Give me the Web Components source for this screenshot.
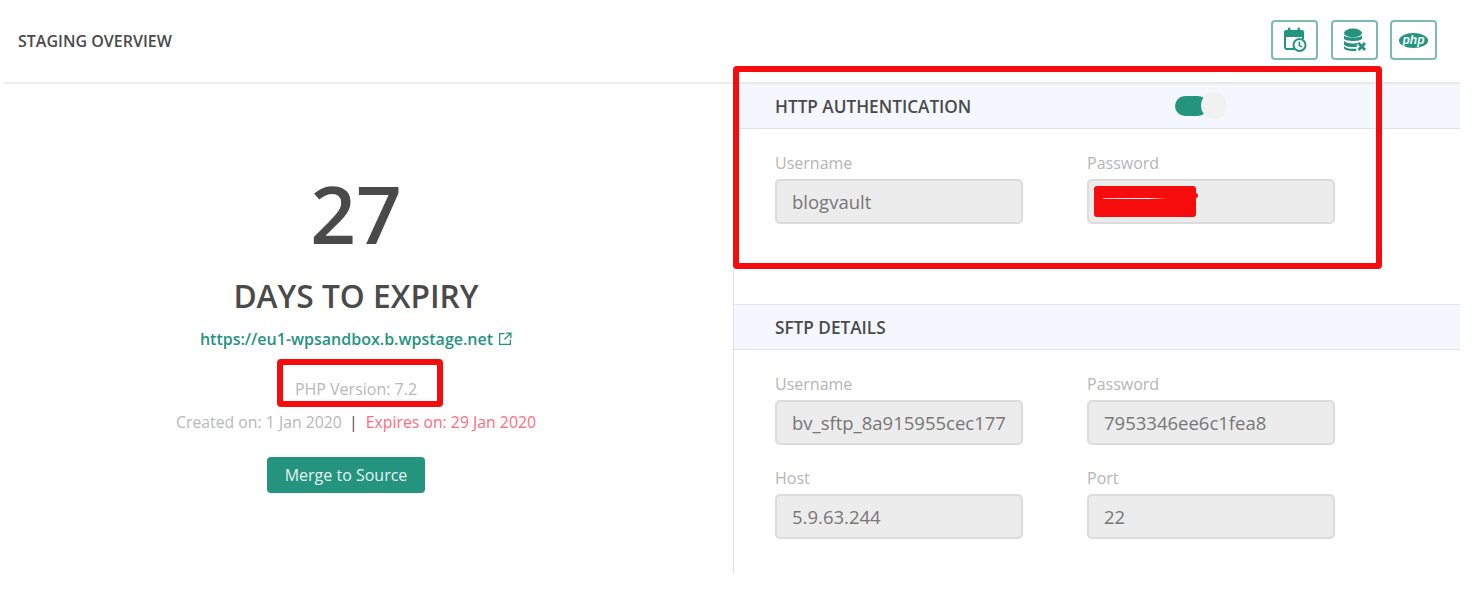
<!DOCTYPE html>
<html lang="en">
<head>
<meta charset="utf-8">
<title>Staging Overview</title>
<style>
  html, body { margin: 0; background: #fff; }
  body { font-family: "Open Sans", "Liberation Sans", sans-serif; color: #4a4a4a; }
</style>
</head>
<body>
<staging-page>
  <overview-header slot="header" title-text="Staging Overview">
    <icon-button icon="schedule" style="margin-right:1px"></icon-button>
    <icon-button icon="database"></icon-button>
    <icon-button icon="php"></icon-button>
  </overview-header>
  <expiry-panel slot="left"></expiry-panel>
  <detail-section slot="right" heading="HTTP Authentication" toggle>
    <field-box label="Username" value="blogvault"></field-box>
    <field-box label="Password" value="" masked></field-box>
  </detail-section>
  <detail-section slot="right" heading="SFTP Details">
    <field-box label="Username" value="bv_sftp_8a915955cec177"></field-box>
    <field-box label="Password" value="7953346ee6c1fea8"></field-box>
    <field-box label="Host" value="5.9.63.244"></field-box>
    <field-box label="Port" value="22"></field-box>
  </detail-section>
  <annotation-box slot="notes" style="left:733px;top:66px;width:649px;height:203px"></annotation-box>
  <annotation-box slot="notes" style="left:277px;top:359px;width:166px;height:48px"></annotation-box>
</staging-page>

<script>
  class StagingPage extends HTMLElement {
    constructor() {
      super();
      this._shadowRoot = this.attachShadow({ mode: "open" });
      this._shadowRoot.innerHTML = `
        <style>
          :host { display: block; position: relative; width: 1476px; height: 610px; overflow: hidden; }
          .content { display: grid; grid-template-columns: 729px 727px; margin: -1px 0 0 4px; width: 1456px; }
          .right { height: 491px; border-left: 1px solid #e3e3e3; display: flex; flex-direction: column; }
        </style>
        <slot name="header"></slot>
        <div class="content">
          <div><slot name="left"></slot></div>
          <div class="right"><slot name="right"></slot></div>
        </div>
        <slot name="notes"></slot>
      `;
    }
  }

  class OverviewHeader extends HTMLElement {
    constructor() {
      super();
      this._shadowRoot = this.attachShadow({ mode: "open" });
      this._shadowRoot.innerHTML = `
        <style>
          :host { display: flex; align-items: center; justify-content: space-between; box-sizing: border-box;
            width: 1456px; height: 84px; margin-left: 4px; padding: 0 23px 2px 14px; border-bottom: 2px solid #ececec; }
          h1 { margin: 0; padding-top: 2px; font-size: 16px; font-weight: 600; color: #4a4a4a; text-transform: uppercase; }
          .actions { display: flex; gap: 12px; }
        </style>
        <h1></h1>
        <div class="actions"><slot></slot></div>
      `;
      this._shadowRoot.querySelector("h1").textContent = this.getAttribute("title-text");
    }
  }

  const ICONS = {
    schedule: `
      <svg width="24" height="26" viewBox="0 0 24 26" fill="none">
        <path d="M2 7.500V20a2 2 0 0 0 2 2h7" stroke="#25947f" stroke-width="2"/>
        <path d="M1 5a2 2 0 0 1 2-2h16a2 2 0 0 1 2 2v5H1z" fill="#25947f"/>
        <path d="M20 9v3" stroke="#25947f" stroke-width="2"/>
        <rect x="5" y="0.500" width="2.400" height="4" rx="1" fill="#25947f"/>
        <rect x="14.500" y="0.500" width="2.400" height="4" rx="1" fill="#25947f"/>
        <circle cx="16.500" cy="18" r="6" fill="#fff" stroke="#25947f" stroke-width="2"/>
        <path d="M16.300 14.600v3.800l2.800 1.500" stroke="#25947f" stroke-width="1.600"/>
      </svg>`,
    database: `
      <svg width="24" height="24" viewBox="0 0 24 24" fill="#25947f">
        <ellipse cx="10" cy="5" rx="9" ry="4.400"/>
        <path d="M1 7.200C2.600 10.400 17.400 10.400 19 7.200v3.600c-1.600 3-16.400 3-18 0z"/>
        <path d="M1 12.800c2 3 11 3.400 15 1.600l-2.500 2.800 .6 1.600C9 19.600 2.600 18.800 1 16.400z"/>
        <path d="M1 18c1.600 2.600 7.500 3.200 12 2.700l.5 2.100C8 23.400 1 22.400 1 20z"/>
        <path d="M15.500 15l6.500 7M22 15l-6.500 7" stroke="#25947f" stroke-width="2.800" fill="none"/>
      </svg>`,
    php: `
      <svg width="29" height="15" viewBox="0 0 29 15">
        <ellipse cx="14.500" cy="7.500" rx="14.500" ry="7.500" fill="#25947f"/>
        <text x="14.500" y="10.500" text-anchor="middle" fill="#eef8f6" font-family="'Liberation Sans', sans-serif"
          font-size="12" font-weight="700" font-style="italic">php</text>
      </svg>`,
  };

  class IconButton extends HTMLElement {
    constructor() {
      super();
      this._shadowRoot = this.attachShadow({ mode: "open" });
      this._shadowRoot.innerHTML = `
        <style>
          :host { display: flex; align-items: center; justify-content: center; box-sizing: border-box;
            width: 47px; height: 40px; border: 2px solid #7cbcb0; border-radius: 4px; background: #fff; }
          svg { display: block; }
        </style>
        ${ICONS[this.getAttribute("icon")]}
      `;
    }
  }

  class ExpiryPanel extends HTMLElement {
    constructor() {
      super();
      this._shadowRoot = this.attachShadow({ mode: "open" });
      this._shadowRoot.innerHTML = `
        <style>
          :host { display: flex; flex-direction: column; align-items: center; box-sizing: border-box;
            width: 704px; padding-top: 78px; text-align: center; }
          .count { font-size: 80px; line-height: 104px; font-weight: 600; color: #4a4a4a; }
          h2 { margin: 10px 0 0; font-size: 31.700px; line-height: 42px; font-weight: 600; color: #4a4a4a; text-transform: uppercase; }
          a { display: flex; align-items: center; gap: 5px; margin-top: 11px; font-size: 16px; line-height: 22px;
            font-weight: 600; color: #25947f; text-decoration: none; }
          .php { margin-top: 28px; font-size: 16px; line-height: 22px; color: #b8b8b8; }
          .dates { margin-top: 11px; font-size: 15.800px; line-height: 22px; color: #b8b8b8; }
          .sep { color: #4a4a4a; margin: 0 4px 0 3px; }
          .expires { color: #ff6b81; }
          button { margin: 24px 20px 0 0; width: 158px; height: 36px; border: 0; border-radius: 4px; padding: 0;
            background: #25947f; color: #e4f3f0; font: 400 16px "Open Sans", sans-serif; }
        </style>
        <div class="count">27</div>
        <h2>Days to Expiry</h2>
        <a href="#">https://eu1-wpsandbox.b.wpstage.net
          <svg width="14" height="14" viewBox="0 0 13 13" fill="none" stroke="#25947f" stroke-width="1.200">
            <path d="M6 1.500H1.500v10h10V7M7.500 1h4.500v4.500M12 1L6 7"/>
          </svg>
        </a>
        <div class="php">PHP Version: 7.2</div>
        <div class="dates">Created on: 1 Jan 2020<span class="sep"> | </span><span class="expires">Expires on: 29 Jan 2020</span></div>
        <button type="button">Merge to Source</button>
      `;
    }
  }

  class DetailSection extends HTMLElement {
    constructor() {
      super();
      this._shadowRoot = this.attachShadow({ mode: "open" });
      const toggle = this.hasAttribute("toggle") ? `<span class="toggle"><i></i></span>` : "";
      this._shadowRoot.innerHTML = `
        <style>
          :host { display: block; height: 221px; }
          :host(:last-of-type) { flex: 1; }
          .head { display: flex; align-items: center; box-sizing: border-box; height: 46px; padding-left: 41px;
            background: #f4f7fe; border-top: 1px solid #e4e6ea; border-bottom: 1px solid #dfe2e7; }
          h3 { flex: 0 0 400px; margin: 0; font-size: 17.200px; font-weight: 600; color: #4a4a4a; text-transform: uppercase; }
          .toggle { position: relative; display: block; width: 33px; height: 20px; border-radius: 10px; background: #25947f; }
          .toggle i { position: absolute; left: 26px; top: -4px; width: 26px; height: 27px; border-radius: 50%; background: #f1f1f1; }
          .fields { display: grid; grid-template-columns: 248px 248px; column-gap: 64px; row-gap: 23px; padding: 24px 0 0 41px; }
        </style>
        <div class="head"><h3></h3>${toggle}</div>
        <div class="fields"><slot></slot></div>
      `;
      this._shadowRoot.querySelector("h3").textContent = this.getAttribute("heading");
    }
  }

  class FieldBox extends HTMLElement {
    constructor() {
      super();
      this._shadowRoot = this.attachShadow({ mode: "open" });
      const masked = this.hasAttribute("masked") ? `<span class="mask"></span>` : "";
      this._shadowRoot.innerHTML = `
        <style>
          :host { display: block; }
          label { display: block; font-size: 16px; line-height: 20px; color: #b5b5b5; }
          .box { position: relative; box-sizing: border-box; height: 45px; margin-top: 6px; padding: 0 15px;
            display: flex; align-items: center; background: #ececec; border: 2px solid #dcdcdc; border-radius: 5px;
            font-size: 18.500px; color: #777; white-space: nowrap; }
          .mask { position: absolute; left: 5px; top: 5px; width: 102px; height: 31px; background: #f60c0c; border-radius: 3px; }
          .mask::before { content: ""; position: absolute; left: 9px; top: 12px; width: 64px; height: 1px;
            background: linear-gradient(90deg, #fbb, #fff 70%, #f60c0c); }
          .mask::after { content: ""; position: absolute; right: -2px; top: 7px; width: 4px; height: 5px; border-radius: 50%; background: #f60c0c; }
        </style>
        <label></label>
        <div class="box"><span class="value"></span>${masked}</div>
      `;
      this._shadowRoot.querySelector("label").textContent = this.getAttribute("label");
      this._shadowRoot.querySelector(".value").textContent = this.getAttribute("value");
    }
  }

  class AnnotationBox extends HTMLElement {
    constructor() {
      super();
      this._shadowRoot = this.attachShadow({ mode: "open" });
      this._shadowRoot.innerHTML = `
        <style>
          :host { position: absolute; box-sizing: border-box; border: 6px solid #f60c0c; border-radius: 4px; pointer-events: none; }
        </style>
      `;
    }
  }

  customElements.define("staging-page", StagingPage);
  customElements.define("overview-header", OverviewHeader);
  customElements.define("icon-button", IconButton);
  customElements.define("expiry-panel", ExpiryPanel);
  customElements.define("detail-section", DetailSection);
  customElements.define("field-box", FieldBox);
  customElements.define("annotation-box", AnnotationBox);
</script>
</body>
</html>
